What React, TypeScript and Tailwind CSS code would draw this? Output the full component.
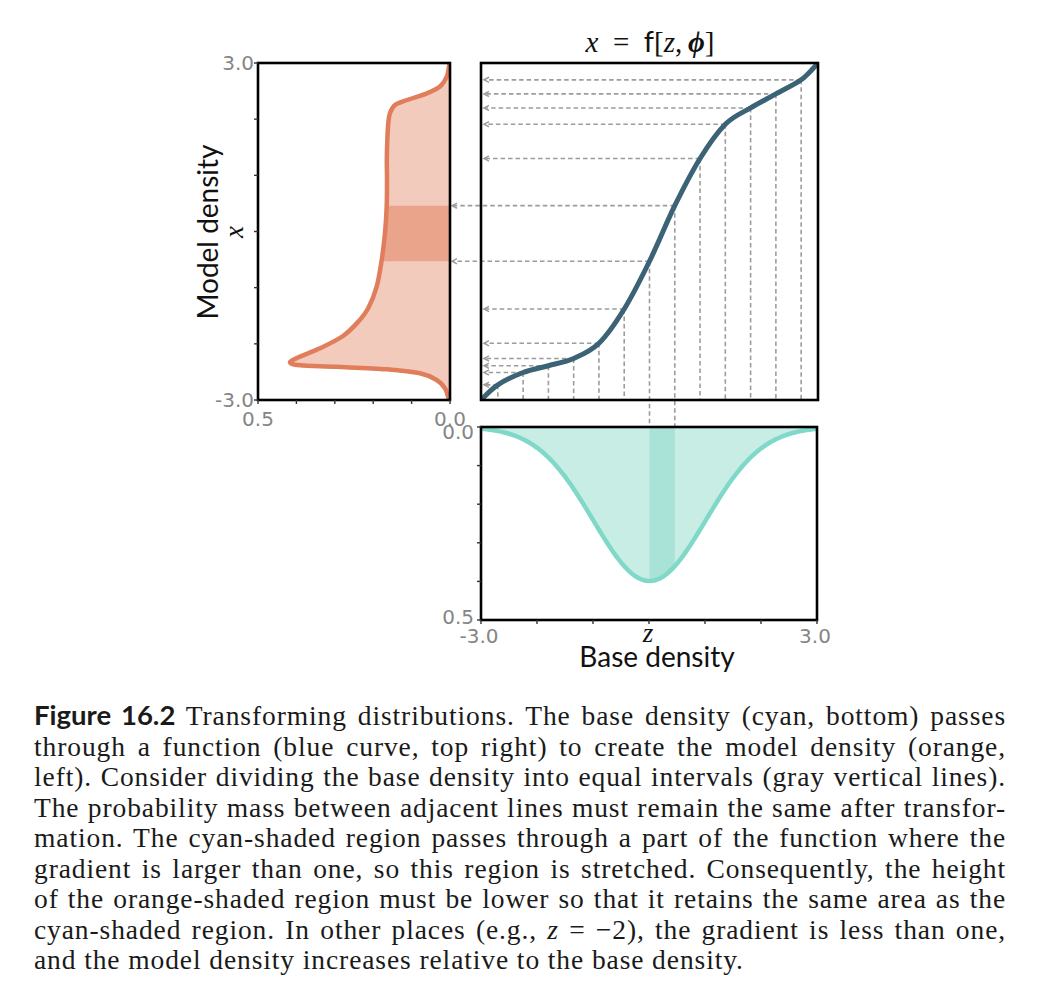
const SERIF = "'Liberation Serif', 'DejaVu Serif', serif";
const SANS = "Lato, 'DejaVu Sans', sans-serif";
const TICK = "'DejaVu Sans', sans-serif";

// panel frames (pixels)
const LP = { l: 258, r: 450, t: 63, b: 400 };
const TP = { l: 481, r: 818, t: 63, b: 400 };
const BP = { l: 481, r: 817, t: 427, b: 620 };

const zx = (z: number) => TP.l + ((z + 3) / 6) * (TP.r - TP.l);
const xy = (x: number) => TP.b - ((x + 3) / 6) * (TP.b - TP.t);
const py = (p: number) => BP.t + (p / 0.5) * (BP.b - BP.t);

type Pt = [number, number];

// x = f[z] read off the figure
const fPts: Pt[] = [
  [-3, -3], [-2.7, -2.73], [-2.25, -2.51], [-1.8, -2.39], [-1.35, -2.26],
  [-0.9, -1.99], [-0.45, -1.38], [0, -0.53], [0.45, 0.46], [0.9, 1.3],
  [1.35, 1.91], [1.8, 2.2], [2.25, 2.45], [2.7, 2.7], [3, 3],
];

// model density outline (pixel coords, top to bottom)
const modelPts: Pt[] = [
  [449.5, 63], [447, 76], [440, 86.5], [427, 93.3], [407, 100], [395, 105],
  [390, 113], [388.3, 123], [387.3, 140], [386.8, 160], [387, 180], [386.7, 206],
  [385, 233], [381.7, 260], [376.7, 286.7], [368.3, 308], [358, 322], [343, 336],
  [320, 348.3], [298, 357.5], [290, 362.5], [300, 365.2], [336.7, 366.8],
  [386.7, 369.3], [420, 373.3], [436.7, 380], [445, 388.3], [448.5, 398], [450, 400],
];

function smooth(pts: Pt[]): string {
  let d = `M${pts[0][0]},${pts[0][1]}`;
  for (let i = 0; i < pts.length - 1; i++) {
    const p0 = pts[i - 1] ?? pts[i];
    const p1 = pts[i];
    const p2 = pts[i + 1];
    const p3 = pts[i + 2] ?? p2;
    const c1 = [p1[0] + (p2[0] - p0[0]) / 6, p1[1] + (p2[1] - p0[1]) / 6];
    const c2 = [p2[0] - (p3[0] - p1[0]) / 6, p2[1] - (p3[1] - p1[1]) / 6];
    d += ` C${c1[0]},${c1[1]} ${c2[0]},${c2[1]} ${p2[0]},${p2[1]}`;
  }
  return d;
}

const fPath = smooth(fPts.map(([z, x]) => [zx(z), xy(x)] as Pt));
const modelPath = smooth(modelPts);

const gauss = (z: number) => Math.exp(-(z * z) / 2) / Math.sqrt(2 * Math.PI);
const basePts: Pt[] = [];
for (let i = 0; i <= 120; i++) {
  const z = -3 + (i * 6) / 120;
  basePts.push([zx(z), py(gauss(z))]);
}
const basePath = "M" + basePts.map((p) => `${p[0].toFixed(2)},${p[1].toFixed(2)}`).join(" L");

const samples = fPts.slice(1, -1);
const DASH = "#9c9c9c";

function Arrow({ x, y }: { x: number; y: number }) {
  return (
    <path d={`M${x + 5},${y - 2.6} L${x},${y} L${x + 5},${y + 2.6}`} fill="none" stroke={DASH} strokeWidth={1.5} />
  );
}

function Figure() {
  const lTicks = [0, 1, 2, 3, 4, 5, 6].map((k) => LP.t + (k * (LP.b - LP.t)) / 6);
  const lbTicks = [0, 1, 2, 3, 4, 5].map((k) => LP.l + (k * (LP.r - LP.l)) / 5);
  const bTicks = [0, 1, 2, 3, 4, 5].map((k) => BP.t + (k * (BP.b - BP.t)) / 5);
  const bbTicks = [0, 1, 2, 3, 4, 5, 6].map((k) => BP.l + (k * (BP.r - BP.l)) / 6);

  return (
    <svg width={1042} height={690} viewBox="0 0 1042 690" className="block">
      <defs>
        <clipPath id="lp"><rect x={LP.l} y={LP.t} width={LP.r - LP.l} height={LP.b - LP.t} /></clipPath>
        <clipPath id="tp"><rect x={TP.l} y={TP.t} width={TP.r - TP.l} height={TP.b - TP.t} /></clipPath>
        <clipPath id="bp"><rect x={BP.l} y={BP.t} width={BP.r - BP.l} height={BP.b - BP.t} /></clipPath>
        <clipPath id="lband"><rect x={LP.l} y={xy(0.46)} width={LP.r - LP.l} height={xy(-0.53) - xy(0.46)} /></clipPath>
        <clipPath id="bband"><rect x={zx(0)} y={BP.t} width={zx(0.45) - zx(0)} height={BP.b - BP.t} /></clipPath>
      </defs>

      {/* title */}
      <text x={650} y={52} textAnchor="middle" fontSize={29} fill="#111" fontFamily={SERIF}>
        <tspan fontStyle="italic">x</tspan>
        <tspan>{"\u2002=\u2002"}</tspan>
        <tspan fontFamily={SANS}>f</tspan>
        <tspan>[</tspan>
        <tspan fontStyle="italic">z</tspan>
        <tspan>{",\u2009"}</tspan>
        <tspan fontStyle="italic" fontWeight="bold">ϕ</tspan>
        <tspan>]</tspan>
      </text>

      {/* model density (left) */}
      <g clipPath="url(#lp)">
        <path d={modelPath + " Z"} fill="#f3cbbc" />
        <path d={modelPath + " Z"} fill="#eaa48b" clipPath="url(#lband)" />
        <path d={modelPath} fill="none" stroke="#e07e5b" strokeWidth={4.5} strokeLinejoin="round" />
      </g>

      {/* base density (bottom) */}
      <g clipPath="url(#bp)">
        <path d={`${basePath} L${BP.r},${BP.t} L${BP.l},${BP.t} Z`} fill="#c8ede5" />
        <path d={`${basePath} L${BP.r},${BP.t} L${BP.l},${BP.t} Z`} fill="#a9e2d7" clipPath="url(#bband)" />
        <path d={basePath} fill="none" stroke="#80d9c8" strokeWidth={4.5} />
      </g>

      {/* dashed guide lines */}
      {samples.map(([z, x]) => {
        const cx = zx(z);
        const cy = xy(x);
        const long = z === 0 || z === 0.45;
        const tip = long ? 452 : 484;
        return (
          <g key={z}>
            <line x1={cx} y1={cy} x2={cx} y2={long ? BP.t : TP.b} stroke={DASH} strokeWidth={1.6} strokeDasharray="4.5 3" />
            <line x1={cx} y1={cy} x2={tip + 1} y2={cy} stroke={DASH} strokeWidth={1.6} strokeDasharray="4.5 3" />
            <Arrow x={tip} y={cy} />
          </g>
        );
      })}

      {/* function curve */}
      <g clipPath="url(#tp)">
        <path d={fPath} fill="none" stroke="#3b6275" strokeWidth={5} strokeLinecap="round" />
      </g>

      {/* frames */}
      <rect x={LP.l} y={LP.t} width={LP.r - LP.l} height={LP.b - LP.t} fill="none" stroke="#000" strokeWidth={2.6} />
      <rect x={TP.l} y={TP.t} width={TP.r - TP.l} height={TP.b - TP.t} fill="none" stroke="#000" strokeWidth={2.6} />
      <rect x={BP.l} y={BP.t} width={BP.r - BP.l} height={BP.b - BP.t} fill="none" stroke="#000" strokeWidth={2.6} />

      {/* ticks */}
      <g stroke="#333" strokeWidth={1.4}>
        {lTicks.map((y) => <line key={"a" + y} x1={LP.l - 4} y1={y} x2={LP.l} y2={y} />)}
        {lbTicks.map((x) => <line key={"b" + x} x1={x} y1={LP.b} x2={x} y2={LP.b + 4} />)}
        {bTicks.map((y) => <line key={"c" + y} x1={BP.l - 4} y1={y} x2={BP.l} y2={y} />)}
        {bbTicks.map((x) => <line key={"d" + x} x1={x} y1={BP.b} x2={x} y2={BP.b + 4} />)}
      </g>

      {/* tick labels */}
      <g fill="#858585" fontSize={20} fontFamily={TICK}>
        <text x={254} y={70} textAnchor="end">3.0</text>
        <text x={254} y={407} textAnchor="end">-3.0</text>
        <text x={258} y={426} textAnchor="middle">0.5</text>
        <text x={450} y={426} textAnchor="middle">0.0</text>
        <text x={474} y={439} textAnchor="end">0.0</text>
        <text x={474} y={624} textAnchor="end">0.5</text>
        <text x={479} y={643} textAnchor="middle">-3.0</text>
        <text x={815} y={643} textAnchor="middle">3.0</text>
      </g>

      {/* axis labels */}
      <text x={648} y={642} textAnchor="middle" fontSize={27} fontStyle="italic" fontFamily={SERIF} fill="#111">z</text>
      <text x={657} y={667} textAnchor="middle" fontSize={28} fontFamily={SANS} fill="#111">Base density</text>
      <text transform="translate(218 232) rotate(-90)" textAnchor="middle" fontSize={28} fontFamily={SANS} fill="#111">Model density</text>
      <text transform="translate(243 232) rotate(-90)" textAnchor="middle" fontSize={27} fontStyle="italic" fontFamily={SERIF} fill="#111">x</text>
    </svg>
  );
}

const lines: React.ReactNode[] = [
  <>
    <span className="font-bold tracking-normal" style={{ fontFamily: SANS }}>Figure 16.2</span> Transforming distributions. The base density (cyan, bottom) passes
  </>,
  "through a function (blue curve, top right) to create the model density (orange,",
  "left). Consider dividing the base density into equal intervals (gray vertical lines).",
  "The probability mass between adjacent lines must remain the same after transfor-",
  "mation. The cyan-shaded region passes through a part of the function where the",
  "gradient is larger than one, so this region is stretched. Consequently, the height",
  "of the orange-shaded region must be lower so that it retains the same area as the",
  <>
    cyan-shaded region. In other places (e.g., <i>z</i> = −2), the gradient is less than one,
  </>,
];

export default function App() {
  return (
    <div className="min-h-[1006px] w-[1042px] bg-white">
      <Figure />
      <div className="w-[1006px] pl-[34px] pt-[10px] text-[27.5px] leading-[30.5px] tracking-[0.9px] text-[#1a1a1a] font-['Liberation_Serif',serif]">
        {lines.map((l, i) => (
          <div key={i} className="text-justify [text-align-last:justify]">{l}</div>
        ))}
        <div>and the model density increases relative to the base density.</div>
      </div>
    </div>
  );
}
